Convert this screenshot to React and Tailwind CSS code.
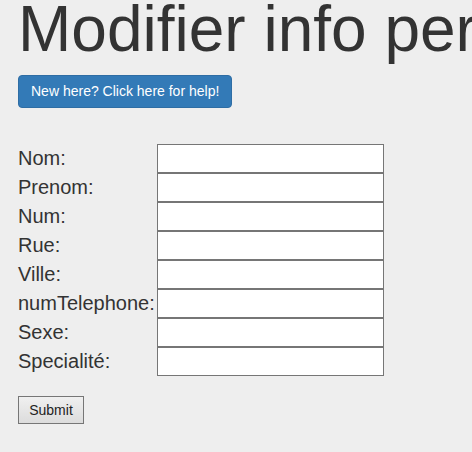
const fields = ['Nom:', 'Prenom:', 'Num:', 'Rue:', 'Ville:', 'numTelephone:', 'Sexe:', 'Specialité:'];

export default function App() {
  return (
    <div className="min-h-screen overflow-hidden bg-[#eeeeee] px-[18px] font-['Liberation_Sans',Arial,sans-serif] text-[#333333]">
      <h1 className="whitespace-nowrap text-[64px] font-normal leading-[58px]">Modifier info personnelles</h1>
      <button
        type="button"
        className="mt-[17px] h-[33px] rounded-[4px] border border-[#2e6da4] bg-[#337ab7] px-[12px] text-[14px] text-white"
      >
        New here? Click here for help!
      </button>

      <form className="mt-[36px]">
        <div className="grid w-max grid-cols-[139px_227px] items-center">
          {fields.map((label) => (
            <div key={label} className="contents">
              <label className="whitespace-nowrap text-[20px] leading-[23px]">{label}</label>
              <input type="text" className="h-[29px] w-[227px] border border-[#767676] bg-white px-[2px] text-[14px] outline-none" />
            </div>
          ))}
        </div>
        <button
          type="submit"
          className="mt-[20px] h-[28px] w-[66px] border border-[#767676] bg-gradient-to-b from-[#f0f0f0] to-[#dcdcdc] text-[14px] text-[#222]"
        >
          Submit
        </button>
      </form>
    </div>
  );
}
